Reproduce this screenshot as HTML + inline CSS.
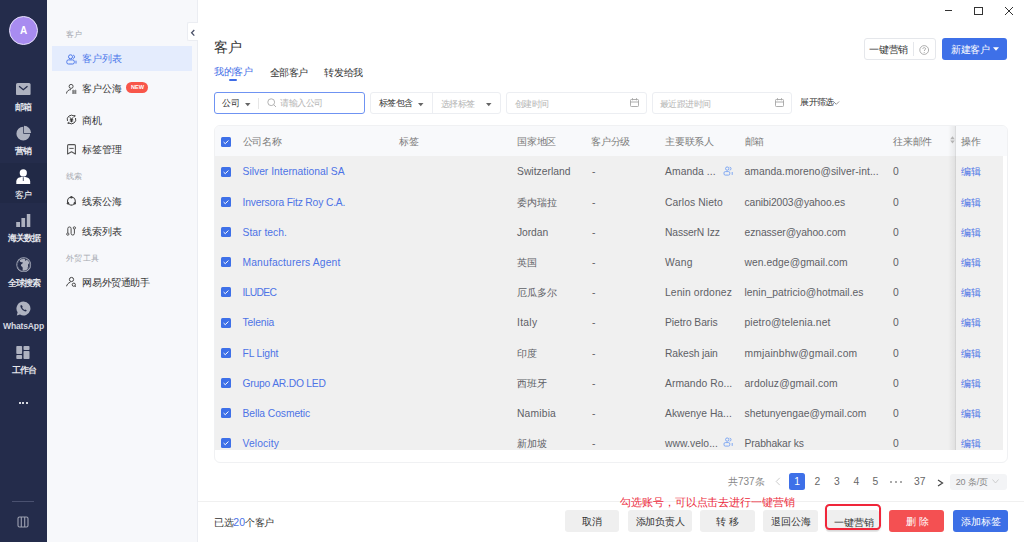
<!DOCTYPE html>
<html><head><meta charset="utf-8">
<style>
*{margin:0;padding:0;box-sizing:border-box}
html,body{width:1024px;height:542px;overflow:hidden;background:#fff;font-family:"Liberation Sans",sans-serif;color:#333}
.a{position:absolute}
.t{position:absolute;white-space:nowrap;line-height:1}
#nav{left:0;top:0;width:47px;height:542px;background:#242c4b}
.nl{position:absolute;left:0;width:47px;text-align:center;font-size:9px;color:#e4e6ec;font-weight:bold;line-height:10px;margin-top:1px;letter-spacing:-0.5px;text-indent:-0.5px}
#sub{left:47px;top:0;width:151px;height:542px;background:#f7f8fb;border-right:1px solid #ebedf2}
.sl{position:absolute;left:66px;font-size:8px;color:#a5a8b0;line-height:10px;margin-top:1px;letter-spacing:0.3px}
.si{position:absolute;left:82.4px;font-size:9.8px;color:#333;line-height:12px;margin-top:1px}
.ic{position:absolute}
.pg{font-size:10.3px;color:#666}
.btn{top:510.2px;height:22.2px;border-radius:3px;background:#efefef}
.bt{top:516.5px;font-size:9.5px;color:#333;text-align:center}

.hd{font-size:10px;color:#7a7a7a;letter-spacing:-0.2px}
.td{font-size:10.3px;color:#5e6066}
.cj{font-size:9.8px}
.lk{color:#4d73e6}

</style></head><body>
<!-- dark nav -->
<div id="nav" class="a">
  <div class="a" style="left:8.6px;top:15.6px;width:29.6px;height:29.6px;border-radius:50%;background:#a88cf0;border:1px solid #e8e2fb"></div>
  <div class="t" style="left:8.5px;top:25.9px;width:30px;text-align:center;color:#fff;font-size:10px;font-weight:bold">A</div>
  <!-- mail -->
  <svg class="ic" style="left:16px;top:82.9px" width="14.6" height="12.3" viewBox="0 0 14.6 12.3"><rect x="0" y="0" width="14.6" height="12.3" rx="1.6" fill="#aeb2c0"/><path d="M3.1 3.2 L7.3 6.8 L11.5 3.2" stroke="#242c4b" stroke-width="1.25" fill="none"/></svg>
  <div class="nl" style="top:101px">邮箱</div>
  <!-- pie -->
  <svg class="ic" style="left:15px;top:125px" width="18" height="18" viewBox="0 0 18 18"><path d="M8.3 1.8 A6.9 6.9 0 1 0 15.2 8.7 L8.3 8.7 Z" fill="#aeb2c0"/><path d="M9 7.9 V0.8 A7.1 7.1 0 0 1 16.1 7.9 Z" fill="#aeb2c0"/></svg>
  <div class="nl" style="top:145px">营销</div>
  <!-- active customer -->
  <div class="a" style="left:0;top:163px;width:47px;height:40px;background:#212946"></div>
  <svg class="ic" style="left:16px;top:169px" width="15" height="16" viewBox="0 0 15 16"><circle cx="7.3" cy="3.9" r="3.6" fill="#fff"/><path d="M0.3 15 V12.6 C0.3 9.8 2.6 8.1 5.3 7.9 H9.3 C12 8.1 14.2 9.8 14.2 12.6 V15 Z" fill="#fff"/><path d="M7.3 8.2 V12" stroke="#242c4b" stroke-width="0.8"/></svg>
  <div class="nl" style="top:189px;color:#fff;font-weight:normal">客户</div>
  <!-- bars -->
  <svg class="ic" style="left:16px;top:213px" width="15" height="15" viewBox="0 0 15 15"><rect x="0.2" y="9" width="3.8" height="5" fill="#aeb2c0"/><rect x="5.4" y="5" width="3.7" height="9" fill="#aeb2c0"/><rect x="10.8" y="1" width="3.5" height="13" fill="#aeb2c0"/></svg>
  <div class="nl" style="top:232.2px;letter-spacing:-1px;text-indent:0px">海关数据</div>
  <!-- globe -->
  <svg class="ic" style="left:15.8px;top:256.9px" width="16" height="16" viewBox="0 0 16 16"><circle cx="7.7" cy="7.7" r="7.4" fill="#aeb2c0"/><circle cx="7.7" cy="7.7" r="6.3" stroke="#242c4b" stroke-width="0.7" fill="none"/><path d="M4 3 C3.2 4.5 4.5 5.5 6.2 5.2 C7.2 5 7 6.5 5.8 7 C4.5 7.5 4.6 9 6 9.8 C7 10.4 6.8 12 6.5 13.6 L5 13.3 C3 12 1.8 10 1.8 7.7 C1.8 5.5 2.7 4 4 3 Z M9.5 1.8 C9 2.8 8.8 3.6 9.6 3.8 C10.5 4 10.2 2.6 11.2 2.6 Z M13.4 6.2 C12.2 6.5 11.6 8.2 12.2 9 C12.6 9.6 11.2 10.5 11.5 11.8 C12.8 10.8 13.6 9.2 13.6 7.7 Z" fill="#242c4b"/></svg>
  <div class="nl" style="top:276.6px;letter-spacing:-1px;text-indent:0px">全球搜索</div>
  <!-- whatsapp -->
  <svg class="ic" style="left:16px;top:301.2px" width="15" height="15" viewBox="0 0 15 15"><path d="M7.5 0.5 A7 7 0 1 1 4 13.6 L0.8 14.5 L1.6 11.3 A7 7 0 0 1 7.5 0.5 Z" fill="#aeb2c0"/><path d="M4.6 4.3 C4.2 5 4.5 6.6 5.9 8.3 C7.4 10 9.3 10.8 10.3 10.3 L10.8 9.4 L9.3 8.5 L8.6 9.1 C7.8 8.8 6.5 7.6 6.1 6.6 L6.7 5.9 L5.9 4.2 Z" fill="#242c4b"/></svg>
  <div class="t" style="left:0;top:321.5px;width:47px;text-align:center;font-size:8.6px;color:#d5d8e0;font-weight:bold;letter-spacing:-0.2px">WhatsApp</div>
  <!-- workbench -->
  <svg class="ic" style="left:16px;top:346px" width="14" height="13" viewBox="0 0 14 13"><rect x="0.3" y="0" width="5.8" height="8" rx="0.8" fill="#aeb2c0"/><rect x="0.3" y="9" width="5.8" height="4" rx="0.8" fill="#aeb2c0"/><rect x="7.5" y="0" width="6" height="4" rx="0.8" fill="#aeb2c0"/><rect x="7.5" y="5" width="6" height="8" rx="0.8" fill="#aeb2c0"/></svg>
  <div class="nl" style="top:364.4px;letter-spacing:-1px;text-indent:0px">工作台</div>
  <div class="a" style="left:18.6px;top:401.8px;width:2px;height:2px;background:#d5d8e0"></div><div class="a" style="left:22.3px;top:401.8px;width:2px;height:2px;background:#d5d8e0"></div><div class="a" style="left:26px;top:401.8px;width:2px;height:2px;background:#d5d8e0"></div>
  <div class="a" style="left:12px;top:501px;width:22px;height:1px;background:#4a5170"></div>
  <svg class="ic" style="left:17px;top:516px" width="12" height="12" viewBox="0 0 12 12"><rect x="1" y="1" width="10" height="10" rx="1.5" stroke="#9ea2b2" stroke-width="1.1" fill="none"/><path d="M4.3 1 V11 M7.7 1 V11" stroke="#9ea2b2" stroke-width="1.1"/></svg>
</div>

<!-- secondary sidebar -->
<div id="sub" class="a"></div>
<div class="sl" style="top:29px">客户</div>
<div class="a" style="left:52px;top:46px;width:140px;height:24.5px;background:#e4ecfd"></div>
<svg class="ic" style="left:65.5px;top:53.5px" width="11" height="11" viewBox="0 0 11 11"><circle cx="4.5" cy="2.8" r="2" stroke="#4d78ea" stroke-width="1" fill="none"/><path d="M7.2 1.1 A1.75 1.75 0 0 1 7.2 4.5" stroke="#4d78ea" stroke-width="1" fill="none"/><rect x="0.8" y="5.9" width="7.5" height="4.1" rx="1.6" stroke="#4d78ea" stroke-width="1" fill="none"/><path d="M10 6.7 V9.6" stroke="#4d78ea" stroke-width="1"/></svg>
<div class="si" style="top:52px;color:#4d78ea">客户列表</div>
<svg class="ic" style="left:66px;top:83px" width="11" height="11" viewBox="0 0 11 11"><circle cx="5.1" cy="3.4" r="2" stroke="#444" stroke-width="0.95" fill="none"/><path d="M0.4 10.6 C0.8 8 2.6 6.6 5 6.6" stroke="#444" stroke-width="0.95" fill="none"/><circle cx="7.3" cy="8" r="0.8" stroke="#444" stroke-width="0.7" fill="none"/><circle cx="9.4" cy="8" r="0.8" stroke="#444" stroke-width="0.7" fill="none"/><circle cx="7.3" cy="10" r="0.8" stroke="#444" stroke-width="0.7" fill="none"/><circle cx="9.4" cy="10" r="0.8" stroke="#444" stroke-width="0.7" fill="none"/></svg>
<div class="si" style="top:82px">客户公海</div>
<div class="a" style="left:126.1px;top:82.1px;width:22px;height:11px;border-radius:6px;background:#f8564a"></div>
<div class="t" style="left:126.6px;top:84.6px;width:22px;text-align:center;font-size:5.6px;color:#fff;font-weight:bold">NEW</div>
<svg class="ic" style="left:66px;top:113.6px" width="11" height="11" viewBox="0 0 11 11"><path d="M1.46 6.97 A4.3 4.3 0 0 1 8.26 2.21" stroke="#444" stroke-width="1" fill="none"/><path d="M9.54 4.03 A4.3 4.3 0 0 1 2.74 8.79" stroke="#444" stroke-width="1" fill="none"/><path d="M7.2 0.9 L9.6 1.2 L8.9 3.5 Z M3.8 10.1 L1.4 9.8 L2.1 7.5 Z" fill="#444"/><path d="M3.9 3.3 L5.5 5.3 L7.1 3.3 M3.8 5.7 H7.2 M3.8 7 H7.2 M5.5 5.3 V8.3" stroke="#333" stroke-width="1" fill="none"/></svg>
<div class="si" style="top:113.5px">商机</div>
<svg class="ic" style="left:67px;top:144px" width="9" height="11" viewBox="0 0 9 11"><path d="M0.6 10 V1.6 Q0.6 0.6 1.6 0.6 H7.4 Q8.4 0.6 8.4 1.6 V10 L4.5 7.8 Z" stroke="#555" stroke-width="1.1" fill="none" stroke-linejoin="round"/><path d="M2.3 4.4 H6.7" stroke="#555" stroke-width="1"/></svg>
<div class="si" style="top:143px">标签管理</div>
<div class="sl" style="top:171px">线索</div>
<svg class="ic" style="left:65.5px;top:195.5px" width="11" height="11" viewBox="0 0 11 11"><circle cx="5.4" cy="5.2" r="3.9" stroke="#444" stroke-width="1.1" fill="none"/><circle cx="5.4" cy="1.3" r="1.2" fill="#444"/><circle cx="2" cy="7.2" r="1.2" fill="#444"/><circle cx="8.8" cy="7.2" r="1.2" fill="#444"/></svg>
<div class="si" style="top:195px">线索公海</div>
<svg class="ic" style="left:66.3px;top:226.2px" width="11" height="10" viewBox="0 0 11 10"><circle cx="1.8" cy="8.1" r="1.15" stroke="#444" stroke-width="0.9" fill="none"/><path d="M1.8 6.9 V2.6 A1.65 1.65 0 0 1 5.1 2.6 V7.4 A1.65 1.65 0 0 0 8.4 7.4 V3.1" stroke="#444" stroke-width="0.95" fill="none"/><circle cx="8.4" cy="1.9" r="1.15" stroke="#444" stroke-width="0.9" fill="none"/></svg>
<div class="si" style="top:225px">线索列表</div>
<div class="sl" style="top:253px">外贸工具</div>
<svg class="ic" style="left:66px;top:276px" width="11" height="11" viewBox="0 0 11 11"><circle cx="5.5" cy="3.5" r="2.1" stroke="#444" stroke-width="1" fill="none"/><path d="M0.5 10.3 C1.1 8.4 2.2 6.9 4.4 6.2" stroke="#444" stroke-width="1" fill="none"/><circle cx="7.8" cy="8.7" r="1.6" stroke="#444" stroke-width="1" fill="none"/><path d="M9 9.9 L9.9 10.7" stroke="#444" stroke-width="1"/></svg>
<div class="si" style="top:276px;font-size:10px;letter-spacing:-0.4px">网易外贸通助手</div>
<!-- collapse btn -->
<div class="a" style="left:186.8px;top:22.3px;width:11px;height:19.2px;background:#fff;border:1px solid #ebedf2;border-right:none;border-radius:2px 0 0 2px"></div>
<svg class="ic" style="left:190px;top:29px" width="6" height="8" viewBox="0 0 6 8"><path d="M4.3 1 L1.6 3.8 L4.3 6.6" stroke="#4a5068" stroke-width="1.3" fill="none"/></svg>

<!-- MAIN -->

<!-- window controls -->
<div class="a" style="left:945px;top:10px;width:7px;height:1px;background:#333"></div>
<div class="a" style="left:974px;top:7px;width:9px;height:8px;border:1px solid #333"></div>
<svg class="ic" style="left:1004px;top:6px" width="10" height="10" viewBox="0 0 10 10"><path d="M1 1 L9 9 M9 1 L1 9" stroke="#333" stroke-width="1"/></svg>

<!-- title & tabs -->
<div class="t" style="left:214px;top:40.5px;font-size:13.8px;color:#333">客户</div>
<div class="t" style="left:214px;top:67.4px;font-size:10px;letter-spacing:-0.3px;color:#3f6ce6">我的客户</div>
<div class="a" style="left:229px;top:79.3px;width:8.3px;height:1.8px;background:#3f6ce6;border-radius:1px"></div>
<div class="t" style="left:269.5px;top:67.6px;font-size:10px;letter-spacing:-0.5px;color:#333">全部客户</div>
<div class="t" style="left:324px;top:67.6px;font-size:10px;letter-spacing:-0.2px;color:#333">转发给我</div>

<!-- top right buttons -->
<div class="a" style="left:863.5px;top:38px;width:72.5px;height:22px;border:1px solid #e5e7eb;border-radius:3px;background:#fff"></div>
<div class="t" style="left:869.4px;top:45px;font-size:10px;letter-spacing:-0.3px;color:#333">一键营销</div>
<div class="a" style="left:913px;top:42px;width:1px;height:14px;background:#e5e7eb"></div>
<svg class="ic" style="left:919px;top:45px" width="11" height="10" viewBox="0 0 11 10"><circle cx="5.2" cy="5" r="4.4" stroke="#9a9a9a" stroke-width="0.8" fill="none"/><path d="M3.8 3.9 C3.8 2.2 6.6 2.2 6.6 3.8 C6.6 4.8 5.2 4.9 5.2 6" stroke="#9a9a9a" stroke-width="0.8" fill="none"/><circle cx="5.2" cy="7.4" r="0.5" fill="#9a9a9a"/></svg>
<div class="a" style="left:942px;top:38px;width:65px;height:22px;border-radius:3px;background:#3e70e8"></div>
<div class="t" style="left:951px;top:45px;font-size:10px;letter-spacing:-0.3px;color:#fff">新建客户</div>
<svg class="ic" style="left:993px;top:47px" width="6" height="4" viewBox="0 0 6 4"><path d="M0 0.3 H6 L3 3.7 Z" fill="#fff"/></svg>

<!-- filter row -->
<div class="a" style="left:214px;top:92px;width:151px;height:22px;border:1px solid #6f93f2;border-radius:3px;background:#fff"></div>
<div class="t" style="left:222px;top:99px;font-size:9px;letter-spacing:-0.4px;color:#333">公司</div>
<svg class="ic" style="left:245px;top:102.8px" width="6" height="4" viewBox="0 0 6 4"><path d="M0 0 H5.5 L2.75 3.3 Z" fill="#666"/></svg>
<div class="a" style="left:258px;top:98px;width:1px;height:11px;background:#e6e6e6"></div>
<svg class="ic" style="left:267px;top:98px" width="10" height="10" viewBox="0 0 10 10"><circle cx="4.2" cy="4.2" r="3.4" stroke="#aaa" stroke-width="0.9" fill="none"/><path d="M6.7 6.7 L9 9" stroke="#aaa" stroke-width="0.9"/></svg>
<div class="t" style="left:280px;top:99px;font-size:9px;letter-spacing:-0.4px;color:#b5b5b5">请输入公司</div>

<div class="a" style="left:370px;top:92px;width:131px;height:22px;border:1px solid #eceef2;border-radius:3px;background:#fff"></div>
<div class="a" style="left:432px;top:93px;width:1px;height:20px;background:#eceef2"></div>
<div class="t" style="left:379px;top:99px;font-size:9px;letter-spacing:-0.6px;color:#333">标签包含</div>
<svg class="ic" style="left:418px;top:102.8px" width="6" height="4" viewBox="0 0 6 4"><path d="M0 0 H5.5 L2.75 3.3 Z" fill="#666"/></svg>
<div class="t" style="left:440.5px;top:99.5px;font-size:9px;letter-spacing:-0.5px;color:#b5b5b5">选择标签</div>
<svg class="ic" style="left:486px;top:102.8px" width="6" height="4" viewBox="0 0 6 4"><path d="M0 0 H5.5 L2.75 3.3 Z" fill="#666"/></svg>

<div class="a" style="left:506px;top:92px;width:141px;height:22px;border:1px solid #eceef2;border-radius:3px;background:#fff"></div>
<div class="t" style="left:514.8px;top:99.5px;font-size:9px;letter-spacing:-0.5px;color:#b5b5b5">创建时间</div>
<svg class="ic" style="left:630px;top:98.2px" width="9" height="9" viewBox="0 0 9 9"><rect x="0.5" y="1.5" width="8" height="7" rx="0.8" stroke="#a5a5a5" stroke-width="0.9" fill="none"/><path d="M0.5 4 H8.5 M2.5 0.2 V2.3 M6.5 0.2 V2.3" stroke="#a5a5a5" stroke-width="0.9"/></svg>
<div class="a" style="left:652px;top:92px;width:140px;height:22px;border:1px solid #eceef2;border-radius:3px;background:#fff"></div>
<div class="t" style="left:660px;top:99.5px;font-size:9px;letter-spacing:-0.55px;color:#b5b5b5">最近跟进时间</div>
<svg class="ic" style="left:775px;top:98.2px" width="9" height="9" viewBox="0 0 9 9"><rect x="0.5" y="1.5" width="8" height="7" rx="0.8" stroke="#a5a5a5" stroke-width="0.9" fill="none"/><path d="M0.5 4 H8.5 M2.5 0.2 V2.3 M6.5 0.2 V2.3" stroke="#a5a5a5" stroke-width="0.9"/></svg>
<div class="t" style="left:800.4px;top:98.3px;font-size:9px;letter-spacing:-0.75px;color:#333">展开筛选</div>
<svg class="ic" style="left:832.5px;top:101.3px" width="7" height="4" viewBox="0 0 7 4"><path d="M0.5 0.5 L3.3 3.3 L6.1 0.5" stroke="#777" stroke-width="0.8" fill="none"/></svg>

<!-- table card -->
<div class="a" style="left:214px;top:125px;width:794px;height:338px;border:1px solid #f0f1f3;border-radius:6px;background:#fff;overflow:hidden">
<div class="a" style="left:0;top:0;width:794px;height:30px;background:#f8f9fb"></div>
<div class="a" style="left:0;top:30px;width:788px;height:294px;background:#f0f0f0"></div>
</div>
<div class="a" style="left:948px;top:126px;width:8px;height:324px;background:linear-gradient(to right,rgba(0,0,0,0),rgba(0,0,0,0.075))"></div>
<div class="a" style="left:955px;top:126px;width:1px;height:324px;background:rgba(0,0,0,0.05)"></div>
<svg class="ic" style="left:221px;top:137px" width="10" height="10" viewBox="0 0 10 10"><rect x="0" y="0" width="10" height="10" rx="1.5" fill="#3e70e8"/><path d="M2.6 5.1 L4.3 6.7 L7.4 3.5" stroke="#fff" stroke-width="1" fill="none"/></svg>
<div class="t hd" style="left:242.5px;top:136.5px">公司名称</div>
<div class="t hd" style="left:399px;top:136.5px">标签</div>
<div class="t hd" style="left:517px;top:136.5px">国家地区</div>
<div class="t hd" style="left:591px;top:136.5px">客户分级</div>
<div class="t hd" style="left:665px;top:136.5px">主要联系人</div>
<div class="t hd" style="left:744.5px;top:136.5px">邮箱</div>
<div class="t hd" style="left:893px;top:136.5px">往来邮件</div>
<div class="t hd" style="left:961px;top:136.5px">操作</div>
<svg class="ic" style="left:950px;top:136.3px" width="5" height="8" viewBox="0 0 5 8"><path d="M0.2 3.2 L2.5 0.3 L4.8 3.2 Z M0.2 4.4 L2.5 7.4 L4.8 4.4 Z" fill="#b4b4b4"/></svg>
<svg class="ic" style="left:221px;top:166.5px" width="10" height="10" viewBox="0 0 10 10"><rect x="0" y="0" width="10" height="10" rx="1.5" fill="#3e70e8"/><path d="M2.6 5.1 L4.3 6.7 L7.4 3.5" stroke="#fff" stroke-width="1" fill="none"/></svg>
<div class="t td lk" style="left:242.5px;top:167.3px;letter-spacing:0.011px">Silver International SA</div>
<div class="t td" style="left:517px;top:167.3px;letter-spacing:0.018px">Switzerland</div>
<div class="t td" style="left:592px;top:167.3px">-</div>
<div class="t td" style="left:665px;top:167.3px;letter-spacing:0.09px">Amanda ...</div>
<svg class="ic" style="left:722.8px;top:165.5px" width="10" height="10" viewBox="0 0 10 10"><circle cx="4.2" cy="2.6" r="1.65" stroke="#74a0f3" stroke-width="0.9" fill="none"/><path d="M6.6 1.2 A1.45 1.45 0 0 1 6.6 4.1" stroke="#74a0f3" stroke-width="0.9" fill="none"/><rect x="1" y="5.6" width="5.8" height="3.5" rx="1.3" stroke="#74a0f3" stroke-width="0.9" fill="none"/><path d="M9.2 6 V8.9" stroke="#74a0f3" stroke-width="0.9"/></svg>
<div class="t td" style="left:744.5px;top:167.3px;letter-spacing:0.069px">amanda.moreno@silver-int...</div>
<div class="t td" style="left:893px;top:167.3px">0</div>
<div class="t td cj lk" style="left:961px;top:167.3px">编辑</div>
<svg class="ic" style="left:221px;top:196.7px" width="10" height="10" viewBox="0 0 10 10"><rect x="0" y="0" width="10" height="10" rx="1.5" fill="#3e70e8"/><path d="M2.6 5.1 L4.3 6.7 L7.4 3.5" stroke="#fff" stroke-width="1" fill="none"/></svg>
<div class="t td lk" style="left:242.5px;top:197.5px;letter-spacing:-0.159px">Inversora Fitz Roy C.A.</div>
<div class="t td cj" style="left:517px;top:197.5px">委内瑞拉</div>
<div class="t td" style="left:592px;top:197.5px">-</div>
<div class="t td" style="left:665px;top:197.5px;letter-spacing:0.089px">Carlos Nieto</div>
<div class="t td" style="left:744.5px;top:197.5px;letter-spacing:-0.08px">canibi2003@yahoo.es</div>
<div class="t td" style="left:893px;top:197.5px">0</div>
<div class="t td cj lk" style="left:961px;top:197.5px">编辑</div>
<svg class="ic" style="left:221px;top:226.9px" width="10" height="10" viewBox="0 0 10 10"><rect x="0" y="0" width="10" height="10" rx="1.5" fill="#3e70e8"/><path d="M2.6 5.1 L4.3 6.7 L7.4 3.5" stroke="#fff" stroke-width="1" fill="none"/></svg>
<div class="t td lk" style="left:242.5px;top:227.7px;letter-spacing:0.03px">Star tech.</div>
<div class="t td" style="left:517px;top:227.7px;letter-spacing:-0.072px">Jordan</div>
<div class="t td" style="left:592px;top:227.7px">-</div>
<div class="t td" style="left:665px;top:227.7px;letter-spacing:-0.126px">NasserN Izz</div>
<div class="t td" style="left:744.5px;top:227.7px;letter-spacing:-0.073px">eznasser@yahoo.com</div>
<div class="t td" style="left:893px;top:227.7px">0</div>
<div class="t td cj lk" style="left:961px;top:227.7px">编辑</div>
<svg class="ic" style="left:221px;top:257.1px" width="10" height="10" viewBox="0 0 10 10"><rect x="0" y="0" width="10" height="10" rx="1.5" fill="#3e70e8"/><path d="M2.6 5.1 L4.3 6.7 L7.4 3.5" stroke="#fff" stroke-width="1" fill="none"/></svg>
<div class="t td lk" style="left:242.5px;top:257.9px;letter-spacing:0.155px">Manufacturers Agent</div>
<div class="t td cj" style="left:517px;top:257.9px">英国</div>
<div class="t td" style="left:592px;top:257.9px">-</div>
<div class="t td" style="left:665px;top:257.9px;letter-spacing:0.36px">Wang</div>
<div class="t td" style="left:744.5px;top:257.9px;letter-spacing:0.063px">wen.edge@gmail.com</div>
<div class="t td" style="left:893px;top:257.9px">0</div>
<div class="t td cj lk" style="left:961px;top:257.9px">编辑</div>
<svg class="ic" style="left:221px;top:287.3px" width="10" height="10" viewBox="0 0 10 10"><rect x="0" y="0" width="10" height="10" rx="1.5" fill="#3e70e8"/><path d="M2.6 5.1 L4.3 6.7 L7.4 3.5" stroke="#fff" stroke-width="1" fill="none"/></svg>
<div class="t td lk" style="left:242.5px;top:288.1px;letter-spacing:-0.666px">ILUDEC</div>
<div class="t td cj" style="left:517px;top:288.1px">厄瓜多尔</div>
<div class="t td" style="left:592px;top:288.1px">-</div>
<div class="t td" style="left:665px;top:288.1px;letter-spacing:0.126px">Lenin ordonez</div>
<div class="t td" style="left:744.5px;top:288.1px;letter-spacing:0.038px">lenin_patricio@hotmail.es</div>
<div class="t td" style="left:893px;top:288.1px">0</div>
<div class="t td cj lk" style="left:961px;top:288.1px">编辑</div>
<svg class="ic" style="left:221px;top:317.5px" width="10" height="10" viewBox="0 0 10 10"><rect x="0" y="0" width="10" height="10" rx="1.5" fill="#3e70e8"/><path d="M2.6 5.1 L4.3 6.7 L7.4 3.5" stroke="#fff" stroke-width="1" fill="none"/></svg>
<div class="t td lk" style="left:242.5px;top:318.3px;letter-spacing:-0.135px">Telenia</div>
<div class="t td" style="left:517px;top:318.3px;letter-spacing:0.294px">Italy</div>
<div class="t td" style="left:592px;top:318.3px">-</div>
<div class="t td" style="left:665px;top:318.3px;letter-spacing:-0.058px">Pietro Baris</div>
<div class="t td" style="left:744.5px;top:318.3px;letter-spacing:0.126px">pietro@telenia.net</div>
<div class="t td" style="left:893px;top:318.3px">0</div>
<div class="t td cj lk" style="left:961px;top:318.3px">编辑</div>
<svg class="ic" style="left:221px;top:347.7px" width="10" height="10" viewBox="0 0 10 10"><rect x="0" y="0" width="10" height="10" rx="1.5" fill="#3e70e8"/><path d="M2.6 5.1 L4.3 6.7 L7.4 3.5" stroke="#fff" stroke-width="1" fill="none"/></svg>
<div class="t td lk" style="left:242.5px;top:348.5px;letter-spacing:-0.129px">FL Light</div>
<div class="t td cj" style="left:517px;top:348.5px">印度</div>
<div class="t td" style="left:592px;top:348.5px">-</div>
<div class="t td" style="left:665px;top:348.5px;letter-spacing:-0.099px">Rakesh jain</div>
<div class="t td" style="left:744.5px;top:348.5px;letter-spacing:0.18px">mmjainbhw@gmail.com</div>
<div class="t td" style="left:893px;top:348.5px">0</div>
<div class="t td cj lk" style="left:961px;top:348.5px">编辑</div>
<svg class="ic" style="left:221px;top:377.9px" width="10" height="10" viewBox="0 0 10 10"><rect x="0" y="0" width="10" height="10" rx="1.5" fill="#3e70e8"/><path d="M2.6 5.1 L4.3 6.7 L7.4 3.5" stroke="#fff" stroke-width="1" fill="none"/></svg>
<div class="t td lk" style="left:242.5px;top:378.7px;letter-spacing:-0.211px">Grupo AR.DO LED</div>
<div class="t td cj" style="left:517px;top:378.7px">西班牙</div>
<div class="t td" style="left:592px;top:378.7px">-</div>
<div class="t td" style="left:665px;top:378.7px;letter-spacing:0.066px">Armando Ro...</div>
<div class="t td" style="left:744.5px;top:378.7px;letter-spacing:0.123px">ardoluz@gmail.com</div>
<div class="t td" style="left:893px;top:378.7px">0</div>
<div class="t td cj lk" style="left:961px;top:378.7px">编辑</div>
<svg class="ic" style="left:221px;top:408.1px" width="10" height="10" viewBox="0 0 10 10"><rect x="0" y="0" width="10" height="10" rx="1.5" fill="#3e70e8"/><path d="M2.6 5.1 L4.3 6.7 L7.4 3.5" stroke="#fff" stroke-width="1" fill="none"/></svg>
<div class="t td lk" style="left:242.5px;top:408.9px;letter-spacing:-0.075px">Bella Cosmetic</div>
<div class="t td" style="left:517px;top:408.9px;letter-spacing:0.18px">Namibia</div>
<div class="t td" style="left:592px;top:408.9px">-</div>
<div class="t td" style="left:665px;top:408.9px;letter-spacing:0.03px">Akwenye Ha...</div>
<div class="t td" style="left:744.5px;top:408.9px;letter-spacing:0.021px">shetunyengae@ymail.com</div>
<div class="t td" style="left:893px;top:408.9px">0</div>
<div class="t td cj lk" style="left:961px;top:408.9px">编辑</div>
<svg class="ic" style="left:221px;top:438.3px" width="10" height="10" viewBox="0 0 10 10"><rect x="0" y="0" width="10" height="10" rx="1.5" fill="#3e70e8"/><path d="M2.6 5.1 L4.3 6.7 L7.4 3.5" stroke="#fff" stroke-width="1" fill="none"/></svg>
<div class="t td lk" style="left:242.5px;top:439.1px;letter-spacing:0.129px">Velocity</div>
<div class="t td cj" style="left:517px;top:439.1px">新加坡</div>
<div class="t td" style="left:592px;top:439.1px">-</div>
<div class="t td" style="left:665px;top:439.1px;letter-spacing:0.081px">www.velo...</div>
<svg class="ic" style="left:722.8px;top:437.3px" width="10" height="10" viewBox="0 0 10 10"><circle cx="4.2" cy="2.6" r="1.65" stroke="#74a0f3" stroke-width="0.9" fill="none"/><path d="M6.6 1.2 A1.45 1.45 0 0 1 6.6 4.1" stroke="#74a0f3" stroke-width="0.9" fill="none"/><rect x="1" y="5.6" width="5.8" height="3.5" rx="1.3" stroke="#74a0f3" stroke-width="0.9" fill="none"/><path d="M9.2 6 V8.9" stroke="#74a0f3" stroke-width="0.9"/></svg>
<div class="t td" style="left:744.5px;top:439.1px;letter-spacing:-0.114px">Prabhakar ks</div>
<div class="t td" style="left:893px;top:439.1px">0</div>
<div class="t td cj lk" style="left:961px;top:439.1px">编辑</div>

<!-- pagination -->
<div class="t" style="left:728px;top:476.5px;font-size:10px;color:#888">共737条</div>
<svg class="ic" style="left:775px;top:477px" width="6" height="9" viewBox="0 0 6 9"><path d="M4.8 0.8 L1.2 4.5 L4.8 8.2" stroke="#c5c5c5" stroke-width="0.9" fill="none"/></svg>
<div class="a" style="left:789px;top:473px;width:16px;height:17px;border-radius:2.5px;background:#3e70e8"></div>
<div class="t pg" style="left:789px;top:476.5px;width:16px;text-align:center;color:#fff">1</div>
<div class="t pg" style="left:814.5px;top:476.5px">2</div>
<div class="t pg" style="left:834px;top:476.5px">3</div>
<div class="t pg" style="left:853.5px;top:476.5px">4</div>
<div class="t pg" style="left:872.5px;top:476.5px">5</div>
<div class="a" style="left:890.2px;top:481.3px;width:2px;height:2px;background:#aaa"></div><div class="a" style="left:895px;top:481.3px;width:2px;height:2px;background:#aaa"></div><div class="a" style="left:899.8px;top:481.3px;width:2px;height:2px;background:#aaa"></div>
<div class="t pg" style="left:914px;top:476.5px">37</div>
<svg class="ic" style="left:937px;top:478.5px" width="7" height="8" viewBox="0 0 7 8"><path d="M1 0.9 L5.6 3.9 L1 6.9" stroke="#444" stroke-width="1.15" fill="none"/></svg>
<div class="a" style="left:950.2px;top:473.5px;width:57px;height:16.2px;border-radius:3px;background:#f3f4f6"></div>
<div class="t" style="left:955.7px;top:478.2px;font-size:9px;color:#888;letter-spacing:-0.1px">20 条/页</div>
<svg class="ic" style="left:992.2px;top:478.8px" width="7" height="5" viewBox="0 0 7 5"><path d="M0.5 0.5 L3.5 4 L6.5 0.5" stroke="#c5c5c5" stroke-width="0.8" fill="none"/></svg>

<!-- footer -->
<div class="a" style="left:198px;top:501px;width:826px;height:1px;background:#f0f0f0"></div>
<div class="t" style="left:620.3px;top:497px;font-size:11px;letter-spacing:-0.1px;color:#ec2a3c">勾选账号，可以点击去进行一键营销</div>
<div class="t" style="left:214px;top:516.5px;font-size:9.5px;color:#333;letter-spacing:-0.35px">已选<span style="color:#4d73e6;font-size:10.5px;letter-spacing:0">20</span>个客户</div>
<div class="a btn" style="left:564.5px;width:54px"></div><div class="t bt" style="left:564.5px;width:54px">取消</div>
<div class="a btn" style="left:627.5px;width:64.5px"></div><div class="t bt" style="left:627.8px;width:64.5px;letter-spacing:-0.3px">添加负责人</div>
<div class="a btn" style="left:700px;width:55px"></div><div class="t bt" style="left:700px;width:55px">转 移</div>
<div class="a btn" style="left:763px;width:55px"></div><div class="t bt" style="left:763px;width:55px">退回公海</div>
<div class="a btn" style="left:826px;width:53px"></div><div class="t bt" style="left:827.2px;width:53px;top:517.6px">一键营销</div>
<div class="a" style="left:824.5px;top:503.5px;width:56.5px;height:26.5px;border:2.6px solid #f0263a;border-radius:4.5px;box-shadow:0 1px 2px rgba(0,0,0,0.12)"></div>
<div class="a btn" style="left:889.4px;width:54.8px;background:#f45052"></div><div class="t bt" style="left:890.5px;width:54.5px;color:#fff">删 除</div>
<div class="a btn" style="left:952.8px;width:54.8px;background:#3c6fe6"></div><div class="t bt" style="left:953.7px;width:54.5px;color:#fff">添加标签</div>

<div id="main"></div>
</body></html>
